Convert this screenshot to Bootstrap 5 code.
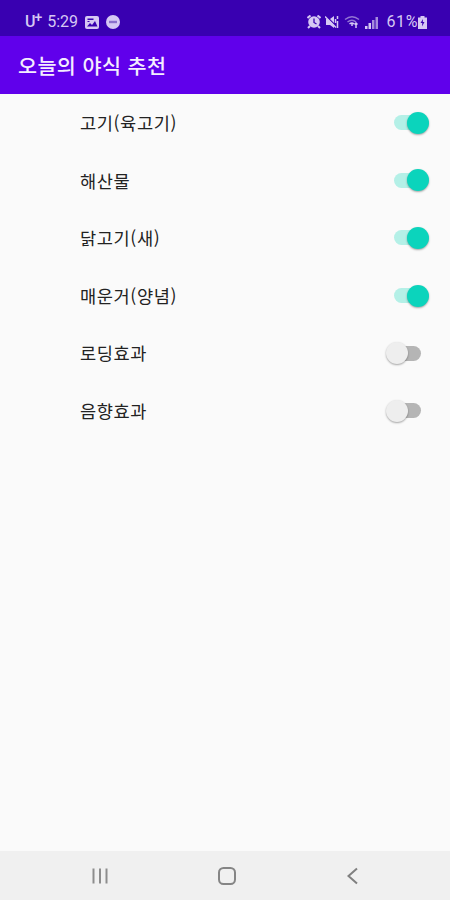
<!DOCTYPE html>
<html lang="ko">
<head>
<meta charset="utf-8">
<meta name="viewport" content="width=device-width, initial-scale=1">
<title>오늘의 야식 추천</title>
<link href="https://cdn.jsdelivr.net/npm/bootstrap@5.3.0/dist/css/bootstrap.min.css" rel="stylesheet">
<style>
body{background:#fafafa;font-family:"Noto Sans CJK KR",sans-serif;color:#222}
svg{display:block;flex:none}
.status-bar{height:36px;background:#3900b1;color:#d6c8f4;font:16px/30px Roboto,sans-serif;padding:7px 23px 0 25px}
.status-bar>div{height:30px}
.carrier{font-size:16px;font-weight:500}
.carrier sup{font-size:14px;top:-.35em;margin-left:-1px}
.clock{margin-left:5px}
.picture{margin-left:7px}
.quiet{margin-left:7px}
.battery-level{letter-spacing:.6px;margin-left:7px}
.app-bar{height:58px;background:#6000eb;padding:0 18px}
.app-title{font-size:20.700px;letter-spacing:.4px;font-weight:500;color:#f4edff;line-height:1;margin:0}
.setting-row{height:57.6px;padding:0 22px 0 80px;font-size:17.6px;letter-spacing:.6px;line-height:1}
.setting-list{height:757px}
.form-check-input.toggle{width:34px;height:15px;margin:0 7px 0 0;border:0;border-radius:8px;background:#b5b5b5;position:relative;float:none}
.toggle::before{content:"";position:absolute;left:-1px;top:-3.5px;width:22px;height:22px;border-radius:50%;background:#eee;box-shadow:0 1px 2px rgba(0,0,0,.35)}
.form-check-input.toggle:checked{background:#b4f0e7;width:27px}
.toggle:checked::before{left:12.5px;background:#0bd4bc}
.nav-keys{height:49px;background:#f0f0f0;padding:0 88px 0 91px}
.nav-keys .btn{border:0}
</style>
</head>
<body class="vh-100 overflow-hidden d-flex flex-column">
<header>
<div class="status-bar d-flex justify-content-between">
  <div class="d-flex align-items-center">
    <span class="carrier">U<sup>+</sup></span><span class="clock">5:29</span>
    <svg class="picture" width="14" height="13" viewBox="0 0 14 13"><rect width="14" height="13" rx="2" fill="#d6c8f4"/><path d="M2 10.5 5 7l2 2 3-4 2.5 5.5z" fill="#3900b1"/><path d="M2.5 2.5h6v1.4h-6zM2.5 5h2v1h-2z" fill="#3900b1"/></svg>
    <svg class="quiet" width="14" height="14" viewBox="0 0 14 14"><circle cx="7" cy="7" r="7" fill="#d6c8f4"/><path d="M3 5.8h8v2.4H3z" fill="#8b70cc"/></svg>
  </div>
  <div class="d-flex align-items-center">
    <svg width="14" height="14" viewBox="0 0 14 14"><path d="m.5 3 3-2.500M10.500.5l3 2.500M3 11l-2 2m10-2 2 2" stroke="#d6c8f4" stroke-width="2"/><circle cx="7" cy="7" r="5.800" fill="#d6c8f4"/><path d="M7 3.500V7.500l2.500 1.500" fill="none" stroke="#3900b1" stroke-width="1.300"/></svg>
    <svg class="ms-1" width="15" height="14" viewBox="0 0 15 14"><path d="M1 4h4l4-3v12L5 10H1z" fill="#d6c8f4"/><path d="m1 1 12 12" stroke="#3900b1" stroke-width="1.500"/><path d="m0 1.500 11 11M12.500 1v3M12.500 6v7M10.500 4v4" stroke="#d6c8f4" stroke-width="1.500"/></svg>
    <svg class="ms-1" width="17" height="14" viewBox="0 0 17 14" fill="none" stroke="#9375d4" stroke-width="1.500"><path d="M1 4.500Q8 -1 15 4.500M3.500 7Q8 3.500 12 7"/><path d="M5.500 9Q8 7 10 9M8 8v3M12 8v5m-1.500-3.500L12 8l1.500 1.500" stroke="#d6c8f4"/></svg>
    <svg class="ms-1" width="14" height="13" viewBox="0 0 14 13"><path d="M0 10h2.500v3H0zM3.500 7H6v6H3.500z" fill="#d6c8f4"/><path d="M7 4h2.500v9H7zM10.500 1H13v12h-2.500z" fill="#a78cdd"/></svg>
    <span class="battery-level">61%</span>
    <svg width="9" height="13" viewBox="0 0 9 13"><path d="M2.500 0h4v1.500H9V13H0V1.500h2.500z" fill="#d6c8f4"/><path d="M5 3 2.500 7h1.800L4 10.500 6.500 6H4.800z" fill="#3900b1"/></svg>
  </div>
</div>
<div class="app-bar d-flex align-items-center"><h1 class="app-title">오늘의 야식 추천</h1></div>
</header>
<main class="setting-list flex-shrink-0">
  <label class="setting-row d-flex align-items-center justify-content-between"><span>고기(육고기)</span><input class="form-check-input toggle" type="checkbox" role="switch" checked></label>
  <label class="setting-row d-flex align-items-center justify-content-between"><span>해산물</span><input class="form-check-input toggle" type="checkbox" role="switch" checked></label>
  <label class="setting-row d-flex align-items-center justify-content-between"><span>닭고기(새)</span><input class="form-check-input toggle" type="checkbox" role="switch" checked></label>
  <label class="setting-row d-flex align-items-center justify-content-between"><span>매운거(양념)</span><input class="form-check-input toggle" type="checkbox" role="switch" checked></label>
  <label class="setting-row d-flex align-items-center justify-content-between"><span>로딩효과</span><input class="form-check-input toggle" type="checkbox" role="switch"></label>
  <label class="setting-row d-flex align-items-center justify-content-between"><span>음향효과</span><input class="form-check-input toggle" type="checkbox" role="switch"></label>
</main>
<nav class="nav-keys d-flex align-items-center justify-content-between flex-shrink-0">
  <button class="btn p-0" aria-label="최근 앱"><svg width="18" height="18" viewBox="0 0 18 18"><path d="M2.500 1.500v15M9 1.500v15M15.500 1.500v15" stroke="#8d8d8d" stroke-width="2"/></svg></button>
  <button class="btn p-0" aria-label="홈"><svg width="18" height="18" viewBox="0 0 18 18"><rect x="1" y="1" width="16" height="16" rx="4.500" fill="none" stroke="#858585" stroke-width="2"/></svg></button>
  <button class="btn p-0" aria-label="뒤로"><svg width="18" height="18" viewBox="0 0 18 18"><path d="m13 1.500-8.500 7.500 8.500 7.500" fill="none" stroke="#808080" stroke-width="2"/></svg></button>
</nav>
<script src="https://cdn.jsdelivr.net/npm/bootstrap@5.3.0/dist/js/bootstrap.bundle.min.js"></script>
</body>
</html>
